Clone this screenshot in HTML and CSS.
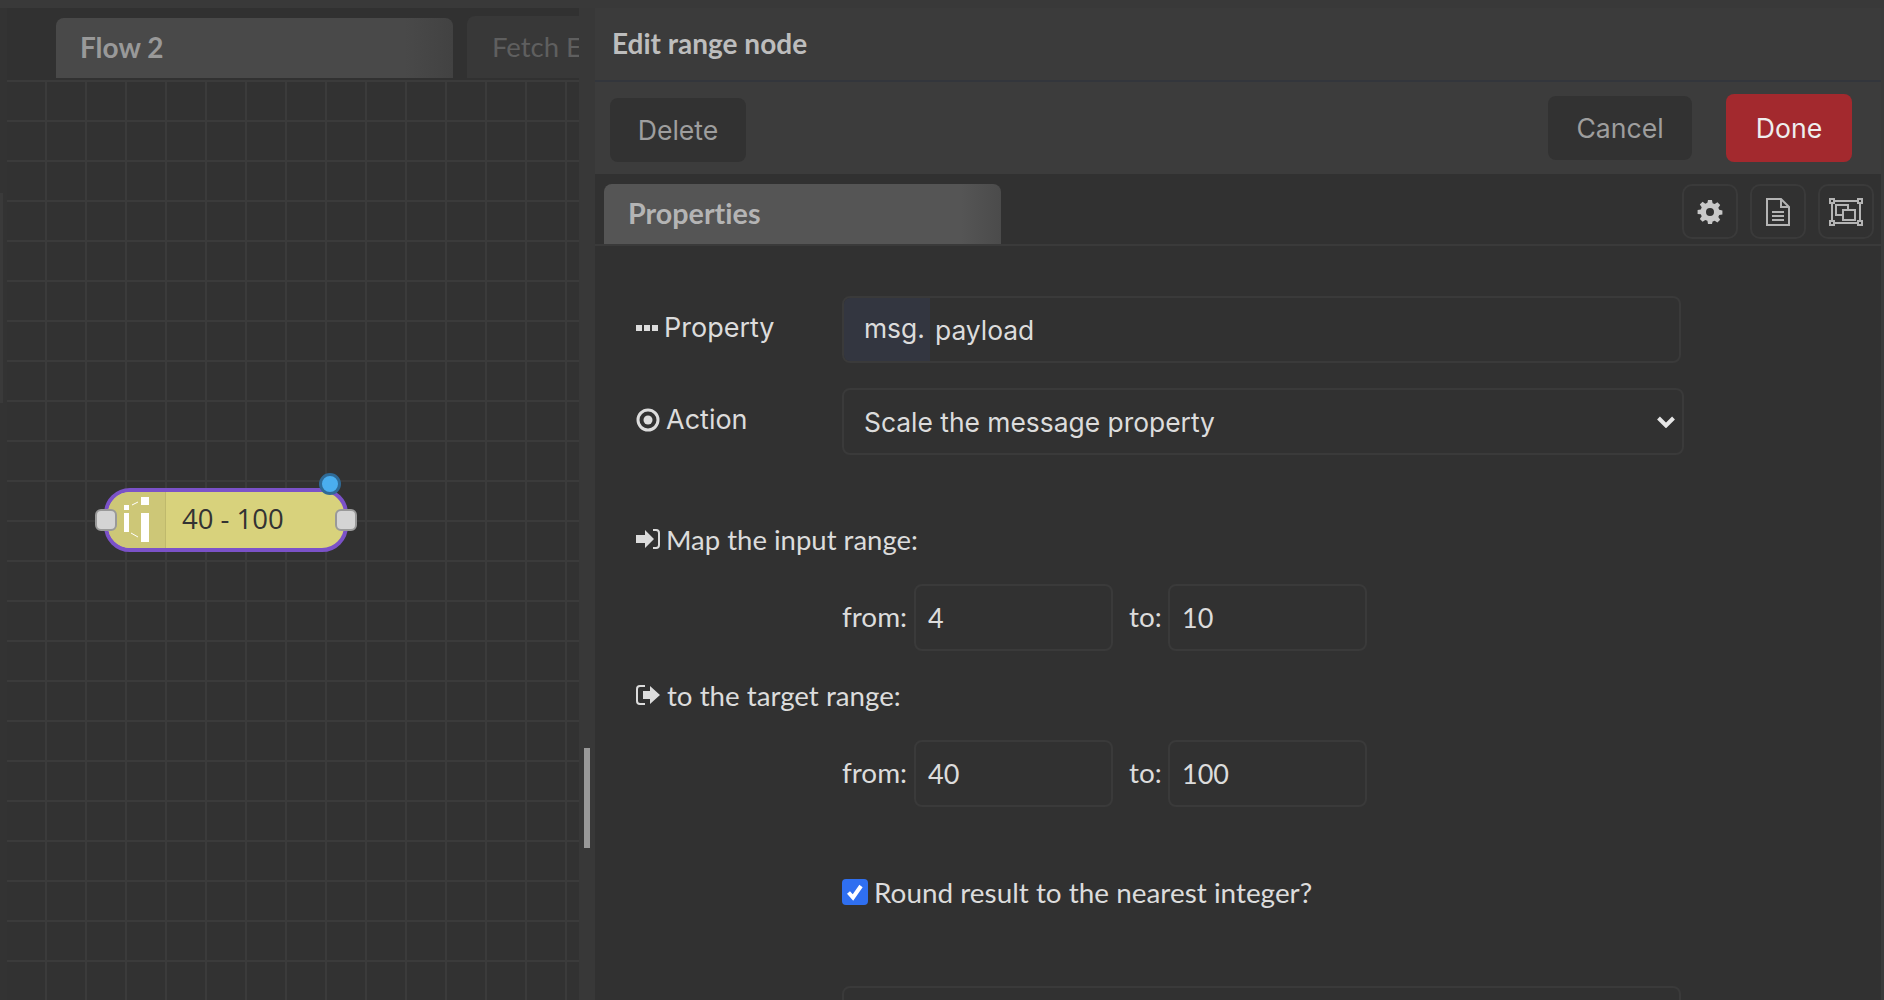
FILE: index.html
```html
<!doctype html>
<html lang="en">
  <head>
    <meta charset="UTF-8" />
    <title>Edit range node</title>
    <link rel="stylesheet" href="styles.css">
  </head>
  <body>
    <div class="top-strip"></div>
    <div class="main">
      <div class="left-edge"><div class="edge-panel"></div></div>

      <!-- Workspace -->
      <div class="workspace">
        <div class="flow-tabs">
          <div class="flow-tab active">Flow 2</div>
          <div class="flow-tab clipped">Fetch E</div>
        </div>
        <div class="canvas">
          <div class="node">
            <div class="node-icon">
              <svg width="34" height="47" viewBox="0 0 34 47">
                <path fill="#fff" d="M0 9h5v5H0zM0 17h5v19H0zM17 1h8v8h-8zM17 17h8v29h-8z"/>
                <path fill="none" stroke="#fff" d="M8 9l6-3M7 37l7 4"/>
              </svg>
            </div>
            <div class="node-label">40 - 100</div>
            <div class="port port-in"></div>
            <div class="port port-out"></div>
            <div class="changed-dot"></div>
          </div>
        </div>
      </div>

      <div class="gutter"><div class="gutter-handle"></div></div>

      <!-- Edit tray -->
      <div class="tray">
        <div class="tray-title">Edit range node</div>
        <div class="tray-buttons">
          <div class="btn btn-delete">Delete</div>
          <div class="btn btn-cancel">Cancel</div>
          <div class="btn btn-done">Done</div>
        </div>
        <div class="tray-tabs">
          <div class="tray-tab">Properties</div>
          <div class="tray-icons">
            <div class="icon-btn">
              <svg width="26" height="26" viewBox="0 0 26 26"><path fill="#c8c8c8" fill-rule="evenodd" d="M11 1h4l.6 3.2 2.1.9 2.7-1.9 2.8 2.8-1.9 2.7.9 2.1 3.2.6v4l-3.2.6-.9 2.1 1.9 2.7-2.8 2.8-2.7-1.9-2.1.9L15 25h-4l-.6-3.2-2.1-.9-2.7 1.9-2.8-2.8 1.9-2.7-.9-2.1L.6 15v-4l3.2-.6.9-2.1-1.9-2.7 2.8-2.8 2.7 1.9 2.1-.9zM13 9a4 4 0 1 0 0 8 4 4 0 0 0 0-8z"/></svg>
            </div>
            <div class="icon-btn">
              <svg width="24" height="28" viewBox="0 0 24 28"><path fill="none" stroke="#b4b4b4" stroke-width="2" d="M1 1h14l8 8v18H1zM15 1v8h8M6 14h12M6 18h12M6 22h12"/></svg>
            </div>
            <div class="icon-btn">
              <svg width="34" height="28" viewBox="0 0 34 28"><path fill="none" stroke="#b4b4b4" stroke-width="2" d="M3 3h28v22H3zM7 7h12v10H7z"/><path fill="#313131" stroke="#b4b4b4" stroke-width="2" d="M14 12h12v10H14z"/><path fill="#313131" stroke="#b4b4b4" stroke-width="2" d="M1 1h4v4H1zM29 1h4v4h-4zM1 23h4v4H1zM29 23h4v4h-4z"/></svg>
            </div>
          </div>
        </div>

        <div class="form">
          <div class="row row-property">
            <div class="label">
              <svg class="label-icon" width="22" height="22" viewBox="0 0 22 22"><path fill="#dcdcdc" d="M0 8h6v6H0zM8 8h6v6H8zM16 8h6v6h-6z"/></svg>
              <span>Property</span>
            </div>
            <div class="field field-typed">
              <div class="prefix">msg.</div>
              <div class="typed-value">payload</div>
            </div>
          </div>

          <div class="row row-action">
            <div class="label">
              <svg class="label-icon" width="24" height="24" viewBox="0 0 24 24"><circle cx="12" cy="12" r="10" fill="none" stroke="#dcdcdc" stroke-width="3"/><circle cx="12" cy="12" r="4.500" fill="#dcdcdc"/></svg>
              <span>Action</span>
            </div>
            <div class="field field-select">
              <span>Scale the message property</span>
              <svg width="18" height="12" viewBox="0 0 18 12"><path fill="none" stroke="#e6e6e6" stroke-width="4" d="M1.500 2l7.500 7.500L16.500 2"/></svg>
            </div>
          </div>

          <div class="heading heading-input">
            <svg class="label-icon" width="24" height="22" viewBox="0 0 24 22"><path fill="#dcdcdc" d="M0 7h9V2l9 9-9 9v-5H0z"/><path fill="none" stroke="#dcdcdc" stroke-width="2" d="M17 2h3q3 0 3 3v12q0 3-3 3h-3"/></svg>
            <span>Map the input range:</span>
          </div>
          <div class="range-row">
            <span class="range-label">from:</span>
            <div class="field field-num">4</div>
            <span class="range-label range-to">to:</span>
            <div class="field field-num">10</div>
          </div>

          <div class="heading heading-target">
            <svg class="label-icon" width="24" height="22" viewBox="0 0 24 22"><path fill="none" stroke="#dcdcdc" stroke-width="2" d="M9 2H4Q1 2 1 5v12q0 3 3 3h5"/><path fill="#dcdcdc" d="M7 7h7V2l10 9-10 9v-5H7z"/></svg>
            <span>to the target range:</span>
          </div>
          <div class="range-row">
            <span class="range-label">from:</span>
            <div class="field field-num">40</div>
            <span class="range-label range-to">to:</span>
            <div class="field field-num">100</div>
          </div>

          <div class="check-row">
            <span class="checkbox">
              <svg width="18" height="18" viewBox="0 0 18 18"><path fill="none" stroke="#fff" stroke-width="4" d="M2.500 9.500l4.500 5L15 3"/></svg>
            </span>
            <span>Round result to the nearest integer?</span>
          </div>

          <div class="field field-name"></div>
        </div>
      </div>
    </div>
  </body>
</html>
```

FILE: styles.css
```css
body {
  margin: 0;
  height: 100vh;
  overflow: hidden;
  display: flex;
  flex-direction: column;
  background-color: #313131;
  color: #dcdcdc;
  font-family: Lato, sans-serif;
  font-variant-ligatures: none;
}

.top-strip {
  height: 8px;
  flex: none;
  background-color: #393939;
}
.main {
  flex: 1;
  display: flex;
  min-height: 0;
}

/* --- Workspace --- */
.left-edge {
  width: 7px;
  flex: none;
  background-color: #333;
  padding-top: 185px;
}
.edge-panel {
  width: 3px;
  height: 210px;
  background-color: #3a3a3a;
}
.workspace {
  width: 572px;
  flex: none;
  display: flex;
  flex-direction: column;
  overflow: hidden;
}
.flow-tabs {
  height: 72px;
  flex: none;
  box-sizing: border-box;
  padding-left: 49px;
  display: flex;
  align-items: flex-end;
  gap: 14px;
  border-bottom: 2px solid transparent;
}
.flow-tab {
  width: 112px;
  flex: none;
  box-sizing: border-box;
  height: 62px;
  padding: 14px 0 0 25px;
  border-radius: 8px 0 0 0;
  background-color: #383838;
  color: #5f5f5f;
  font-size: 27.500px;
  white-space: nowrap;
  overflow: hidden;
}
.flow-tab.active {
  width: 397px;
  height: 60px;
  padding: 12px 0 0 24px;
  border-radius: 8px 8px 0 0;
  background: linear-gradient(to right, #494949 88%, #424242);
  color: #999;
  font-size: 28px;
  font-weight: 700;
}
.canvas {
  position: relative;
  flex: 1;
  background-color: #323232;
  background-image:
    linear-gradient(to right, transparent 38px, #3b3b3b 38px),
    linear-gradient(to bottom, #3b3b3b 2px, transparent 2px);
  background-size: 40px 40px;
}

/* --- Node --- */
.node {
  position: absolute;
  left: 97px;
  top: 408px;
  width: 244px;
  height: 64px;
  box-sizing: border-box;
  display: flex;
  border: 4px solid #7b52c8;
  border-radius: 26px;
  background-color: #d8d27c;
}
.node-icon {
  width: 58px;
  flex: none;
  box-sizing: border-box;
  padding: 4px 0 0 16px;
  border-right: 1px solid #bfb96c;
  border-radius: 22px 0 0 22px;
  background-color: #cdc777;
}
.node-label {
  padding-left: 16px;
  line-height: 54px;
  color: #333;
  font-family: "Open Sans", sans-serif;
  font-size: 27.500px;
}
.port {
  position: absolute;
  top: 17px;
  width: 22px;
  height: 22px;
  box-sizing: border-box;
  border: 2px solid #999;
  border-radius: 6px;
  background-color: #d4d4d4;
}
.port-in { left: -13px; }
.port-out { right: -13px; }
.changed-dot {
  position: absolute;
  top: -19px;
  right: 3px;
  width: 22px;
  height: 22px;
  box-sizing: border-box;
  border: 3px solid #2f6a96;
  border-radius: 50%;
  background-color: #4aaeef;
}

.gutter {
  width: 16px;
  flex: none;
  position: relative;
  background-color: #383838;
}
.gutter-handle {
  position: absolute;
  left: 5px;
  top: 740px;
  width: 6px;
  height: 100px;
  background-color: #999;
}

/* --- Edit tray --- */
.tray {
  flex: 1;
  min-width: 0;
  display: flex;
  flex-direction: column;
  border-right: 3px solid #3a3a3a;
}
.tray-title {
  height: 74px;
  flex: none;
  box-sizing: border-box;
  padding: 18px 0 0 17px;
  border-bottom: 2px solid #33363c;
  background-color: #3b3b3b;
  color: #bdbdbd;
  font-size: 28px;
  font-weight: 700;
}
.tray-buttons {
  height: 92px;
  flex: none;
  box-sizing: border-box;
  padding: 0 29px 0 15px;
  display: flex;
  align-items: center;
  background-color: #3c3c3c;
  font-family: Inter, sans-serif;
  font-size: 26.600px;
}
.btn {
  height: 64px;
  box-sizing: border-box;
  display: flex;
  align-items: center;
  justify-content: center;
  border-radius: 8px;
  background-color: #323232;
  color: #9e9e9e;
}
.btn-delete {
  width: 136px;
  margin-right: auto;
  margin-top: 4px;
}
.btn-cancel {
  width: 144px;
  margin-right: 34px;
}
.btn-done {
  width: 126px;
  height: 68px;
  background-color: #a3292e;
  color: #eee;
}
.tray-tabs {
  height: 72px;
  flex: none;
  box-sizing: border-box;
  padding: 10px 7px 0 9px;
  display: flex;
  justify-content: space-between;
  border-bottom: 2px solid #3a3a3a;
}
.tray-tab {
  width: 397px;
  box-sizing: border-box;
  height: 60px;
  padding: 12px 24px 0;
  border-radius: 8px 8px 0 0;
  background: linear-gradient(to right, #555 90%, #4b4b4b);
  color: #b4b4b4;
  font-size: 28.700px;
  font-weight: 700;
}
.tray-icons {
  display: flex;
  gap: 12px;
}
.icon-btn {
  width: 56px;
  height: 55px;
  box-sizing: border-box;
  display: flex;
  align-items: center;
  justify-content: center;
  border: 2px solid #3a3a3a;
  border-radius: 10px;
}

/* --- Form --- */
.form {
  flex: 1;
  min-height: 0;
  overflow: hidden;
  padding: 50px 0 0 41px;
  font-size: 27.900px;
}
.row {
  display: flex;
  align-items: center;
  height: 67px;
  margin-bottom: 25px;
}
.label {
  width: 206px;
  flex: none;
  display: flex;
  align-items: center;
  gap: 6px;
  margin-bottom: 4px;
  font-family: Inter, sans-serif;
  font-size: 27px;
}
.label-icon { flex: none; }
.field {
  height: 67px;
  box-sizing: border-box;
  border: 2px solid #3a3a3a;
  border-radius: 8px;
  font-family: Inter, sans-serif;
  font-size: 26.400px;
}
.field-typed {
  width: 839px;
  display: flex;
  overflow: hidden;
}
.prefix {
  width: 86px;
  flex: none;
  box-sizing: border-box;
  padding-left: 20px;
  line-height: 60px;
  background-color: #333640;
}
.typed-value {
  padding-left: 5px;
  line-height: 64px;
}
.field-select {
  width: 842px;
  display: flex;
  align-items: center;
  justify-content: space-between;
  padding: 0 7px 0 20px;
}
.heading {
  display: flex;
  align-items: center;
  gap: 6px;
  height: 32px;
}
.heading-input {
  margin-top: 68px;
  font-size: 27.500px;
}
.heading-target {
  margin-top: 28px;
  gap: 7px;
  font-size: 27.700px;
}
.range-row {
  display: flex;
  align-items: center;
  margin: 29px 0 0 206px;
}
.heading-target + .range-row { margin-top: 29px; }
.range-label {
  width: 72px;
  flex: none;
  margin-bottom: 4px;
}
.range-to {
  width: 39px;
  margin-left: 16px;
}
.field-num {
  width: 199px;
  padding-left: 12px;
  line-height: 64px;
  font-family: Lato, sans-serif;
  font-size: 27px;
}
.check-row {
  display: flex;
  align-items: center;
  gap: 6px;
  margin: 72px 0 0 206px;
  height: 26px;
}
.checkbox {
  width: 26px;
  height: 26px;
  flex: none;
  display: flex;
  align-items: center;
  justify-content: center;
  border-radius: 4px;
  background-color: #2f6ff0;
}
.field-name {
  width: 839px;
  margin: 81px 0 0 206px;
}
```
